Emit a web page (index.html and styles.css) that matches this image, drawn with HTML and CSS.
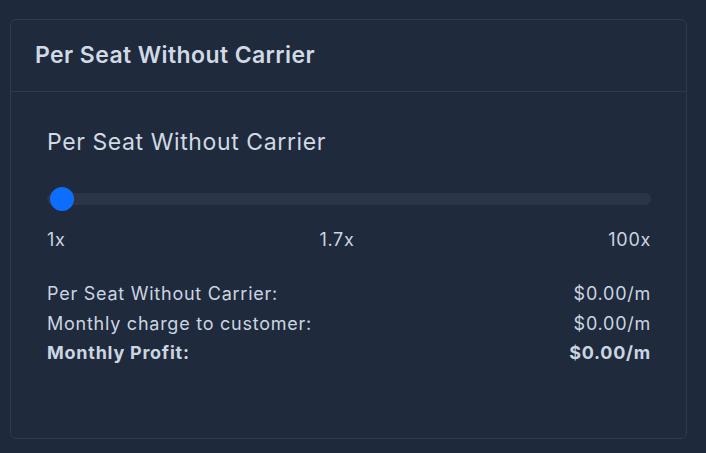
FILE: index.html
```html
<!DOCTYPE html>
<html lang="en">
<head>
<meta charset="utf-8">
<title>Per Seat Without Carrier</title>
<link rel="stylesheet" href="styles.css">
</head>
<body>
<div class="card">
  <div class="card-header">Per Seat Without Carrier</div>
  <div class="card-body">
    <div class="title">Per Seat Without Carrier</div>
    <div class="slider">
      <div class="track"></div>
      <div class="thumb"></div>
    </div>
    <div class="scale">
      <span>1x</span>
      <span>1.7x</span>
      <span>100x</span>
    </div>
    <div class="rows">
      <div class="row"><span>Per Seat Without Carrier:</span><span>$0.00/m</span></div>
      <div class="row"><span>Monthly charge to customer:</span><span>$0.00/m</span></div>
      <div class="row total"><span>Monthly Profit:</span><span>$0.00/m</span></div>
    </div>
  </div>
</div>
</body>
</html>
```

FILE: styles.css
```css
html, body {
  margin: 0;
  padding: 0;
  background: #1e293b;
}
body {
  font-family: Inter, "Noto Sans", "Liberation Sans", sans-serif;
  color: #cbd5e1;
  padding: 19px 0 0 10px;
}
.card {
  width: 675px;
  height: 418px;
  border: 1px solid #2e3a4e;
  border-radius: 6px;
  background: #1f2a3c;
  display: flex;
  flex-direction: column;
}
.card-header {
  height: 71px;
  border-bottom: 1px solid #2e3a4e;
  padding: 0 24px;
  display: flex;
  align-items: center;
  font-size: 23px;
  font-weight: 600;
  letter-spacing: 0.4px;
  color: #d1d9e4;
  padding-bottom: 2px;
  box-sizing: border-box;
  height: 72px;
}
.card-body {
  padding: 35px 35px 0 36px;
}
.title {
  font-size: 23px;
  line-height: 30px;
  letter-spacing: 0.6px;
  color: #d1d9e4;
}
.slider {
  position: relative;
  height: 24px;
  margin-top: 30px;
  display: flex;
  align-items: center;
}
.track {
  flex: 1;
  height: 12px;
  border-radius: 6px;
  background: #2c3547;
}
.thumb {
  position: absolute;
  left: 3px;
  top: 0;
  width: 24px;
  height: 24px;
  border-radius: 50%;
  background: #0d6efd;
}
.scale {
  display: flex;
  justify-content: space-between;
  margin-top: 15px;
  font-size: 18px;
  line-height: 28px;
  letter-spacing: 0.7px;
}
.rows {
  margin-top: 25px;
  font-size: 18px;
  line-height: 29.5px;
  letter-spacing: 0.75px;
}
.row {
  display: flex;
  justify-content: space-between;
}
.row.total {
  font-weight: 700;
}
```
